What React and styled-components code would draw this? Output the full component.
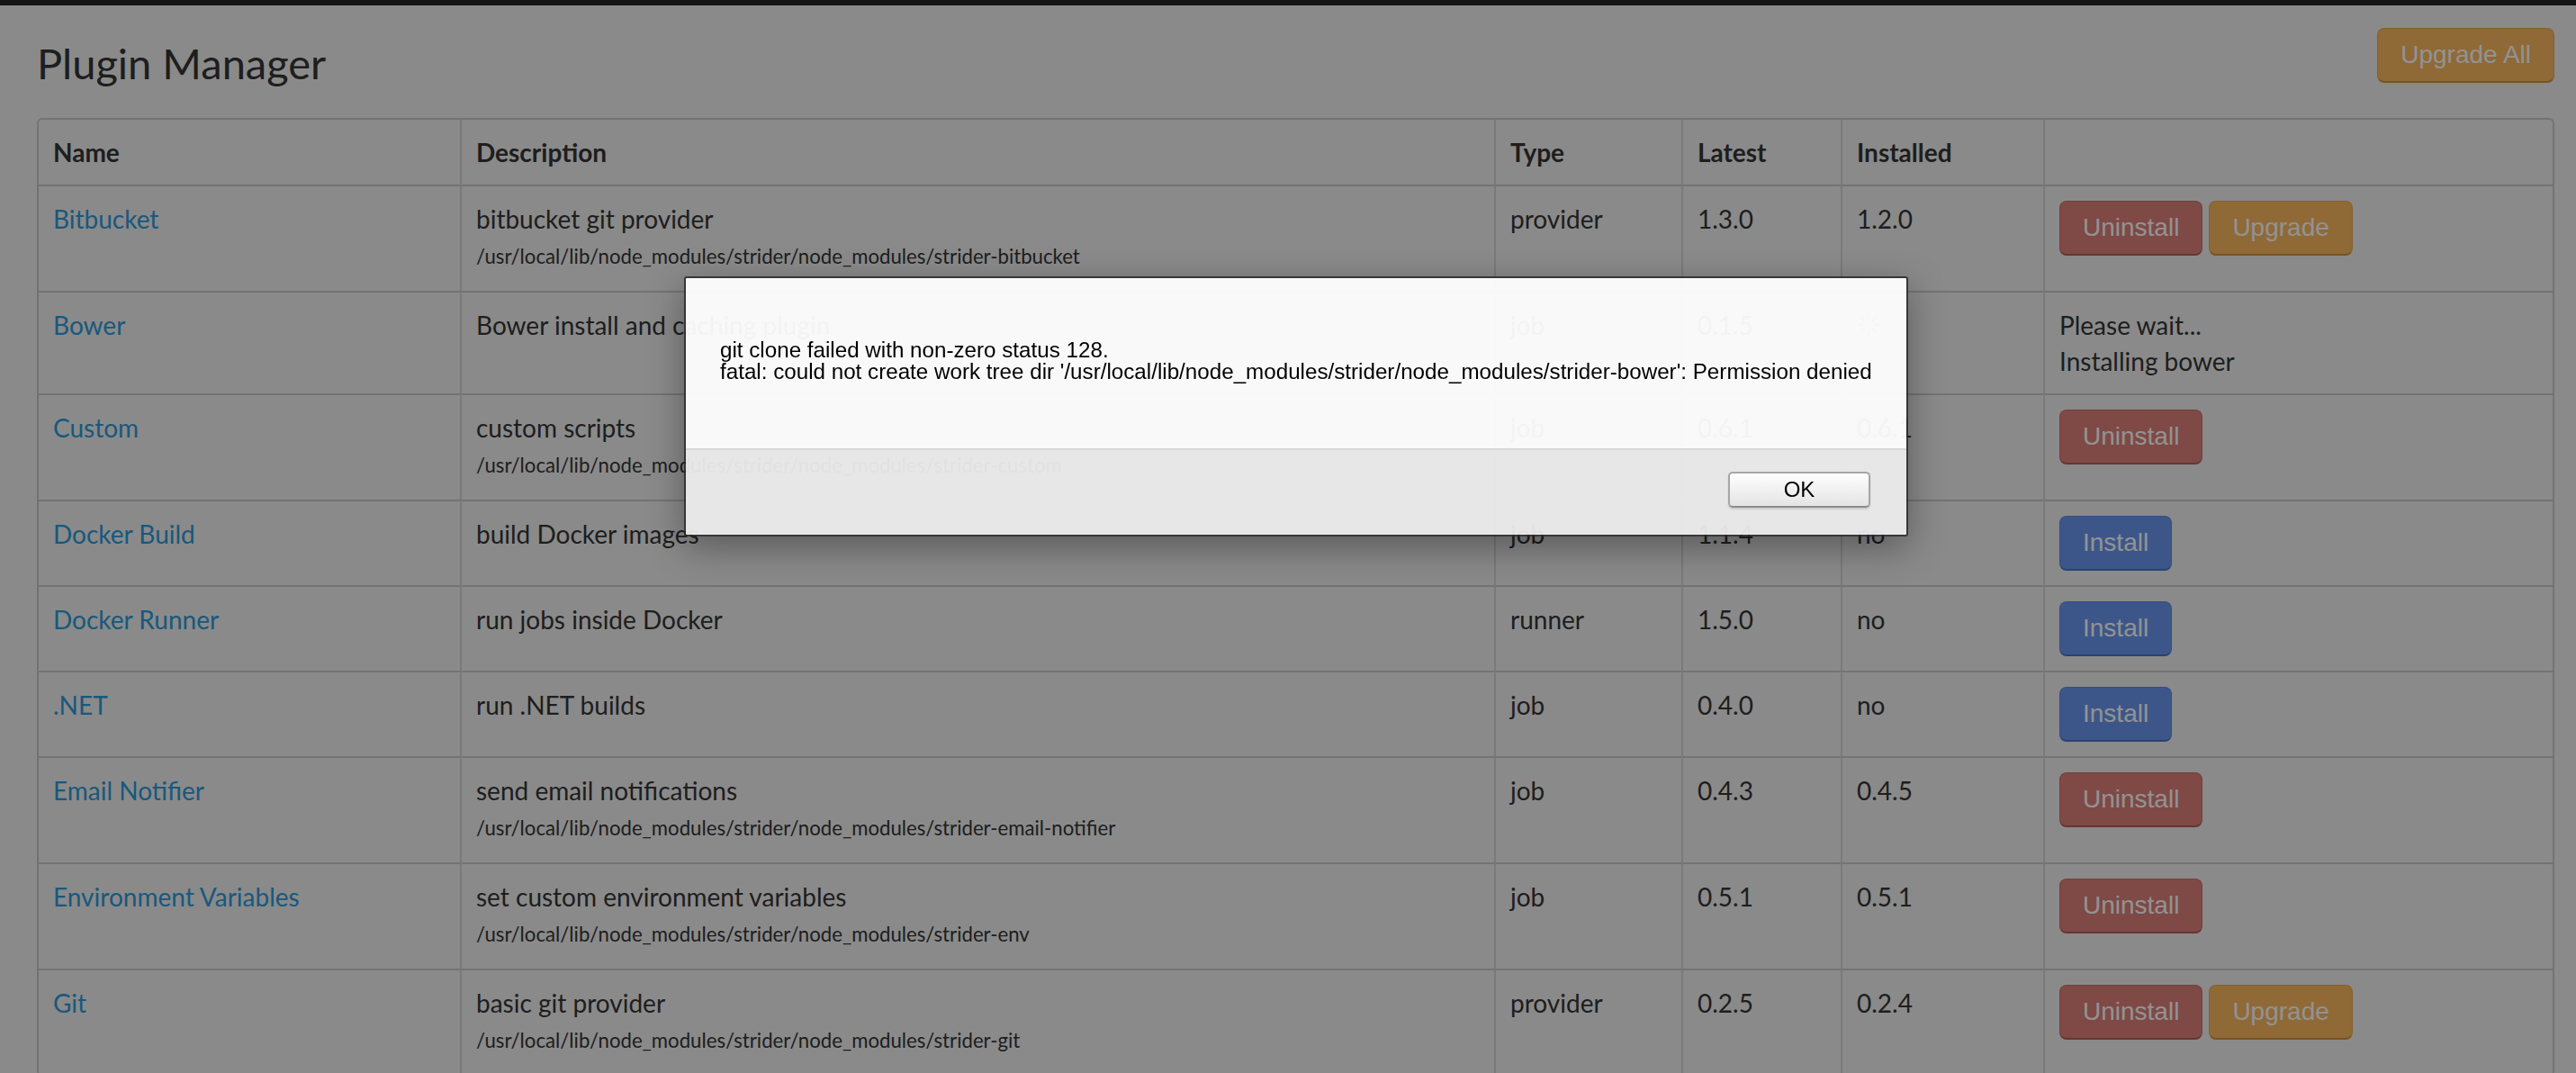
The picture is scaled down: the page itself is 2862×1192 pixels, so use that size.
import styled, { createGlobalStyle } from 'styled-components';
import { Loader } from 'lucide-react';

const GlobalStyle = createGlobalStyle`
    * { box-sizing: border-box; }
    html, body {
        margin: 0;
        overflow: hidden;
    }
    body {
        background: #e6e6e6;
        font-family: Lato, "Open Sans", sans-serif;
        color: #333;
    }
`;

const TopBar = styled.div`
    height: 6px;
    background: #232323;
`;

const Page = styled.main`
    padding: 25px 24px 0 41px;
`;

const Header = styled.div`
    display: flex;
    justify-content: space-between;
    align-items: flex-start;
    margin-bottom: 32px;
`;

const Title = styled.h1`
    margin: 10px 0 0;
    font-size: 47px;
    line-height: 58px;
    font-weight: 400;
    color: #333;
`;

const palette = {
    danger: { bg: '#d47a75', edge: '#c26a66', bottom: '#a95a56' },
    warning: { bg: '#eeb05a', edge: '#dea04c', bottom: '#c58a3a' },
    primary: { bg: '#6690e6', edge: '#5682d8', bottom: '#466ebe' },
};

const Button = styled.button`
    font-family: "Liberation Sans", Arial, sans-serif;
    font-size: 28px;
    line-height: 34px;
    padding: 12px 25px;
    color: #f4f4f4;
    background: ${props => palette[props.$variant].bg};
    border: 1px solid ${props => palette[props.$variant].edge};
    border-bottom: 2px solid ${props => palette[props.$variant].bottom};
    border-radius: 8px;
    cursor: pointer;
`;

const Table = styled.table`
    width: 100%;
    table-layout: fixed;
    border-collapse: separate;
    border-spacing: 0;
    border: 2px solid #c0c0c0;
    border-radius: 6px;
    font-size: 28px;
    line-height: 40px;
`;

const Th = styled.th`
    width: ${props => (props.$w ? `${props.$w}px` : 'auto')};
    text-align: left;
    font-weight: 700;
    padding: 16px;
    border-left: 2px solid #cbcbcb;
    &:first-child { border-left: 0; }
`;

const Td = styled.td`
    padding: 16px;
    vertical-align: top;
    border-top: 2px solid #c0c0c0;
    border-left: 2px solid #cbcbcb;
    &:first-child { border-left: 0; }
`;

const NameLink = styled.a`
    color: #2a93d0;
    text-decoration: none;
`;

const Path = styled.div`
    font-size: 22.2px;
    line-height: 44px;
    white-space: nowrap;
`;

const Actions = styled.div`
    display: flex;
    gap: 7px;
`;

const Spinner = styled(Loader)`
    display: block;
    margin-top: 7px;
    color: #888;
`;

const Overlay = styled.div`
    position: fixed;
    inset: 0;
    background: rgba(0, 0, 0, 0.4);
`;

const Dialog = styled.div`
    position: fixed;
    top: 307px;
    left: 760px;
    width: 1360px;
    border: 2px solid rgba(40, 40, 40, 0.85);
    border-radius: 3px;
    box-shadow: 0 12px 40px rgba(0, 0, 0, 0.35);
    overflow: hidden;
    font-family: "Liberation Sans", Arial, sans-serif;
    color: #000;
`;

const DialogBody = styled.div`
    height: 189px;
    padding: 68px 0 0 38px;
    background: rgba(255, 255, 255, 0.95);
    font-size: 24.2px;
    line-height: 24px;
    white-space: nowrap;
`;

const DialogFooter = styled.div`
    height: 96px;
    display: flex;
    justify-content: flex-end;
    align-items: flex-start;
    padding: 24px 40px 0;
    background: rgba(236, 236, 236, 0.95);
    border-top: 2px solid #d6d6d6;
`;

const OkButton = styled.button`
    width: 158px;
    height: 40px;
    font-family: "Liberation Sans", Arial, sans-serif;
    font-size: 24px;
    color: #000;
    background: linear-gradient(#fefefe, #e4e4e4);
    border: 2px solid #a6a6a6;
    border-bottom-color: #8c8c8c;
    border-radius: 5px;
    box-shadow: 0 2px 2px rgba(0, 0, 0, 0.12);
`;

const base = '/usr/local/lib/node_modules/strider/node_modules/';

const plugins = [
    { name: 'Bitbucket', desc: 'bitbucket git provider', path: 'strider-bitbucket', type: 'provider', latest: '1.3.0', installed: '1.2.0', actions: ['uninstall', 'upgrade'] },
    { name: 'Bower', desc: 'Bower install and caching plugin', type: 'job', latest: '0.1.5', busy: true },
    { name: 'Custom', desc: 'custom scripts', path: 'strider-custom', type: 'job', latest: '0.6.1', installed: '0.6.1', actions: ['uninstall'] },
    { name: 'Docker Build', desc: 'build Docker images', type: 'job', latest: '1.1.4', installed: 'no', actions: ['install'] },
    { name: 'Docker Runner', desc: 'run jobs inside Docker', type: 'runner', latest: '1.5.0', installed: 'no', actions: ['install'] },
    { name: '.NET', desc: 'run .NET builds', type: 'job', latest: '0.4.0', installed: 'no', actions: ['install'] },
    { name: 'Email Notifier', desc: 'send email notifications', path: 'strider-email-notifier', type: 'job', latest: '0.4.3', installed: '0.4.5', actions: ['uninstall'] },
    { name: 'Environment Variables', desc: 'set custom environment variables', path: 'strider-env', type: 'job', latest: '0.5.1', installed: '0.5.1', actions: ['uninstall'] },
    { name: 'Git', desc: 'basic git provider', path: 'strider-git', type: 'provider', latest: '0.2.5', installed: '0.2.4', actions: ['uninstall', 'upgrade'] },
];

const actionButtons = {
    uninstall: { label: 'Uninstall', variant: 'danger' },
    upgrade: { label: 'Upgrade', variant: 'warning' },
    install: { label: 'Install', variant: 'primary' },
};

const App = () => {
    return (
        <>
            <GlobalStyle />
            <TopBar />
            <Page>
                <Header>
                    <Title>Plugin Manager</Title>
                    <Button $variant="warning">Upgrade All</Button>
                </Header>
                <Table>
                    <thead>
                        <tr>
                            <Th $w={468}>Name</Th>
                            <Th $w={1149}>Description</Th>
                            <Th $w={208}>Type</Th>
                            <Th $w={177}>Latest</Th>
                            <Th $w={225}>Installed</Th>
                            <Th></Th>
                        </tr>
                    </thead>
                    <tbody>
                        {plugins.map(p => (
                            <tr key={p.name}>
                                <Td><NameLink href="#">{p.name}</NameLink></Td>
                                <Td>
                                    {p.desc}
                                    {p.path && <Path>{base + p.path}</Path>}
                                </Td>
                                <Td>{p.type}</Td>
                                <Td>{p.latest}</Td>
                                <Td>{p.busy ? <Spinner size={26} /> : p.installed}</Td>
                                <Td>
                                    {p.busy ? (
                                        <>
                                            <div>Please wait...</div>
                                            <div>Installing bower</div>
                                        </>
                                    ) : (
                                        <Actions>
                                            {p.actions.map(a => (
                                                <Button key={a} $variant={actionButtons[a].variant}>
                                                    {actionButtons[a].label}
                                                </Button>
                                            ))}
                                        </Actions>
                                    )}
                                </Td>
                            </tr>
                        ))}
                    </tbody>
                </Table>
            </Page>
            <Overlay />
            <Dialog>
                <DialogBody>
                    <div>git clone failed with non-zero status 128.</div>
                    <div>fatal: could not create work tree dir '/usr/local/lib/node_modules/strider/node_modules/strider-bower': Permission denied</div>
                </DialogBody>
                <DialogFooter>
                    <OkButton>OK</OkButton>
                </DialogFooter>
            </Dialog>
        </>
    );
};

export default App;
